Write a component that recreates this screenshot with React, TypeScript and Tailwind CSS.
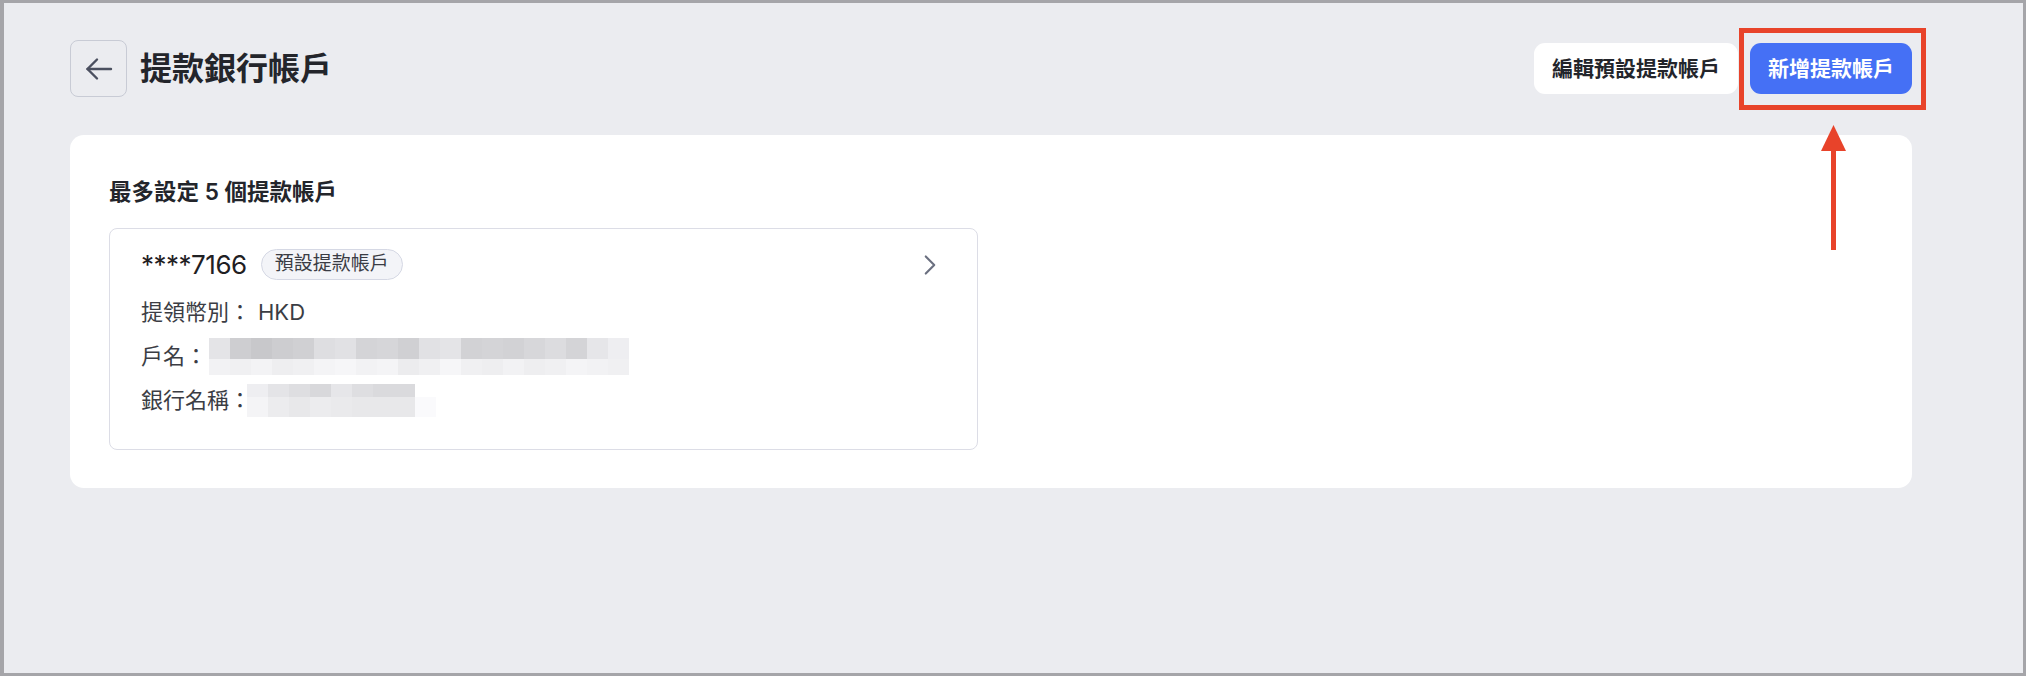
import { ChevronRight } from 'lucide-react';

const nameTop = [228, 206, 200, 205, 208, 222, 225, 212, 214, 208, 225, 228, 210, 212, 210, 215, 220, 212, 230, 238];
const nameBottom = [242, 240, 243, 238, 240, 244, 246, 242, 244, 236, 240, 246, 240, 238, 242, 238, 240, 244, 242, 240];
const bankTop = [238, 228, 222, 216, 230, 222, 218, 218, 255];
const bankBottom = [244, 236, 232, 236, 234, 232, 232, 232, 250];

function Pixelated({ top, bottom, topH, bottomH }: { top: number[]; bottom: number[]; topH: number; bottomH: number }) {
  return (
    <div className="flex flex-col">
      <div className="flex">
        {top.map((g, i) => (
          <div key={i} className="w-[21px]" style={{ height: topH, backgroundColor: `rgb(${g},${g},${g + 3})` }} />
        ))}
      </div>
      <div className="flex">
        {bottom.map((g, i) => (
          <div key={i} className="w-[21px]" style={{ height: bottomH, backgroundColor: `rgb(${g},${g},${Math.min(g + 2, 255)})` }} />
        ))}
      </div>
    </div>
  );
}

export default function App() {
  return (
    <div
      className="w-full h-screen bg-[#a5a5a9] pl-[4px] pt-[3px] pr-[3px] pb-[3px]"
      style={{ fontFamily: '"Inter", "Noto Sans CJK TC", sans-serif' }}
    >
      <div className="relative h-full bg-[#ebecf0] pl-[66px] pr-[111px] pt-[37px]">
        {/* Header */}
        <div className="flex items-center justify-between">
          <div className="flex items-center">
            <button className="w-[57px] h-[57px] rounded-[8px] border border-[#c8cbd5] flex items-center justify-center">
              <svg width="28" height="24" viewBox="0 0 28 24" fill="none" stroke="#4b5060" strokeWidth="2.4" strokeLinecap="round" strokeLinejoin="round">
                <path d="M26 12H2.5" />
                <path d="M12 2.5 2.5 12 12 21.5" />
              </svg>
            </button>
            <h1 className="ml-[13px] text-[32px] font-bold text-[#23252b] leading-none">提款銀行帳戶</h1>
          </div>
          <div className="flex items-center gap-[12px]">
            <button className="h-[51px] px-[18px] rounded-[11px] bg-white text-[21px] font-bold text-[#23252b]">
              編輯預設提款帳戶
            </button>
            <button className="h-[51px] px-[18px] rounded-[11px] bg-[#4570f5] text-[21px] font-bold text-white">
              新增提款帳戶
            </button>
          </div>
        </div>

        {/* Card */}
        <div className="mt-[38px] bg-white rounded-[14px] px-[39px] pt-[42px] pb-[38px]">
          <h2 className="text-[22.5px] leading-[30px] font-semibold text-[#23252b]">最多設定 5 個提款帳戶</h2>
          <div className="mt-[21px] w-[869px] border border-[#dcdde6] rounded-[8px] px-[31px] pt-[20px] pb-[27px]">
            <div className="h-[31px] flex items-center justify-between">
              <div className="flex items-center">
                <span className="text-[26px] text-[#1f2023] tracking-[-0.5px]">****7166</span>
                <span className="ml-[14px] h-[31px] px-[13px] rounded-full border border-[#d5d8e4] bg-[#f3f4f8] flex items-center text-[19px] text-[#3a3c44]">
                  預設提款帳戶
                </span>
              </div>
              <ChevronRight className="w-[34px] h-[34px] text-[#6b7080] -mr-[1px]" strokeWidth={1.5} />
            </div>
            <div className="mt-[10px] h-[44px] flex items-center text-[22px] text-[#3b3d44]">
              <span>提領幣別：</span>
              <span className="ml-[7px]">HKD</span>
            </div>
            <div className="h-[44px] flex items-center text-[22px] text-[#3b3d44]">
              <span>戶名：</span>
              <div className="ml-[2px]">
                <Pixelated top={nameTop} bottom={nameBottom} topH={21} bottomH={16} />
              </div>
            </div>
            <div className="h-[44px] flex items-center text-[22px] text-[#3b3d44]">
              <span>銀行名稱：</span>
              <div className="ml-[-4px]">
                <Pixelated top={bankTop} bottom={bankBottom} topH={13} bottomH={20} />
              </div>
            </div>
          </div>
        </div>

        {/* Annotation overlay */}
        <div className="absolute left-[1735px] top-[25px] w-[187px] h-[82px] border-[5px] border-[#e8432a]" />
        <svg className="absolute left-[1817px] top-[122px]" width="25" height="125" viewBox="0 0 25 125">
          <polygon points="12.5,0 25,26 0,26" fill="#e8432a" />
          <rect x="10" y="25" width="5" height="100" fill="#e8432a" />
        </svg>
      </div>
    </div>
  );
}
